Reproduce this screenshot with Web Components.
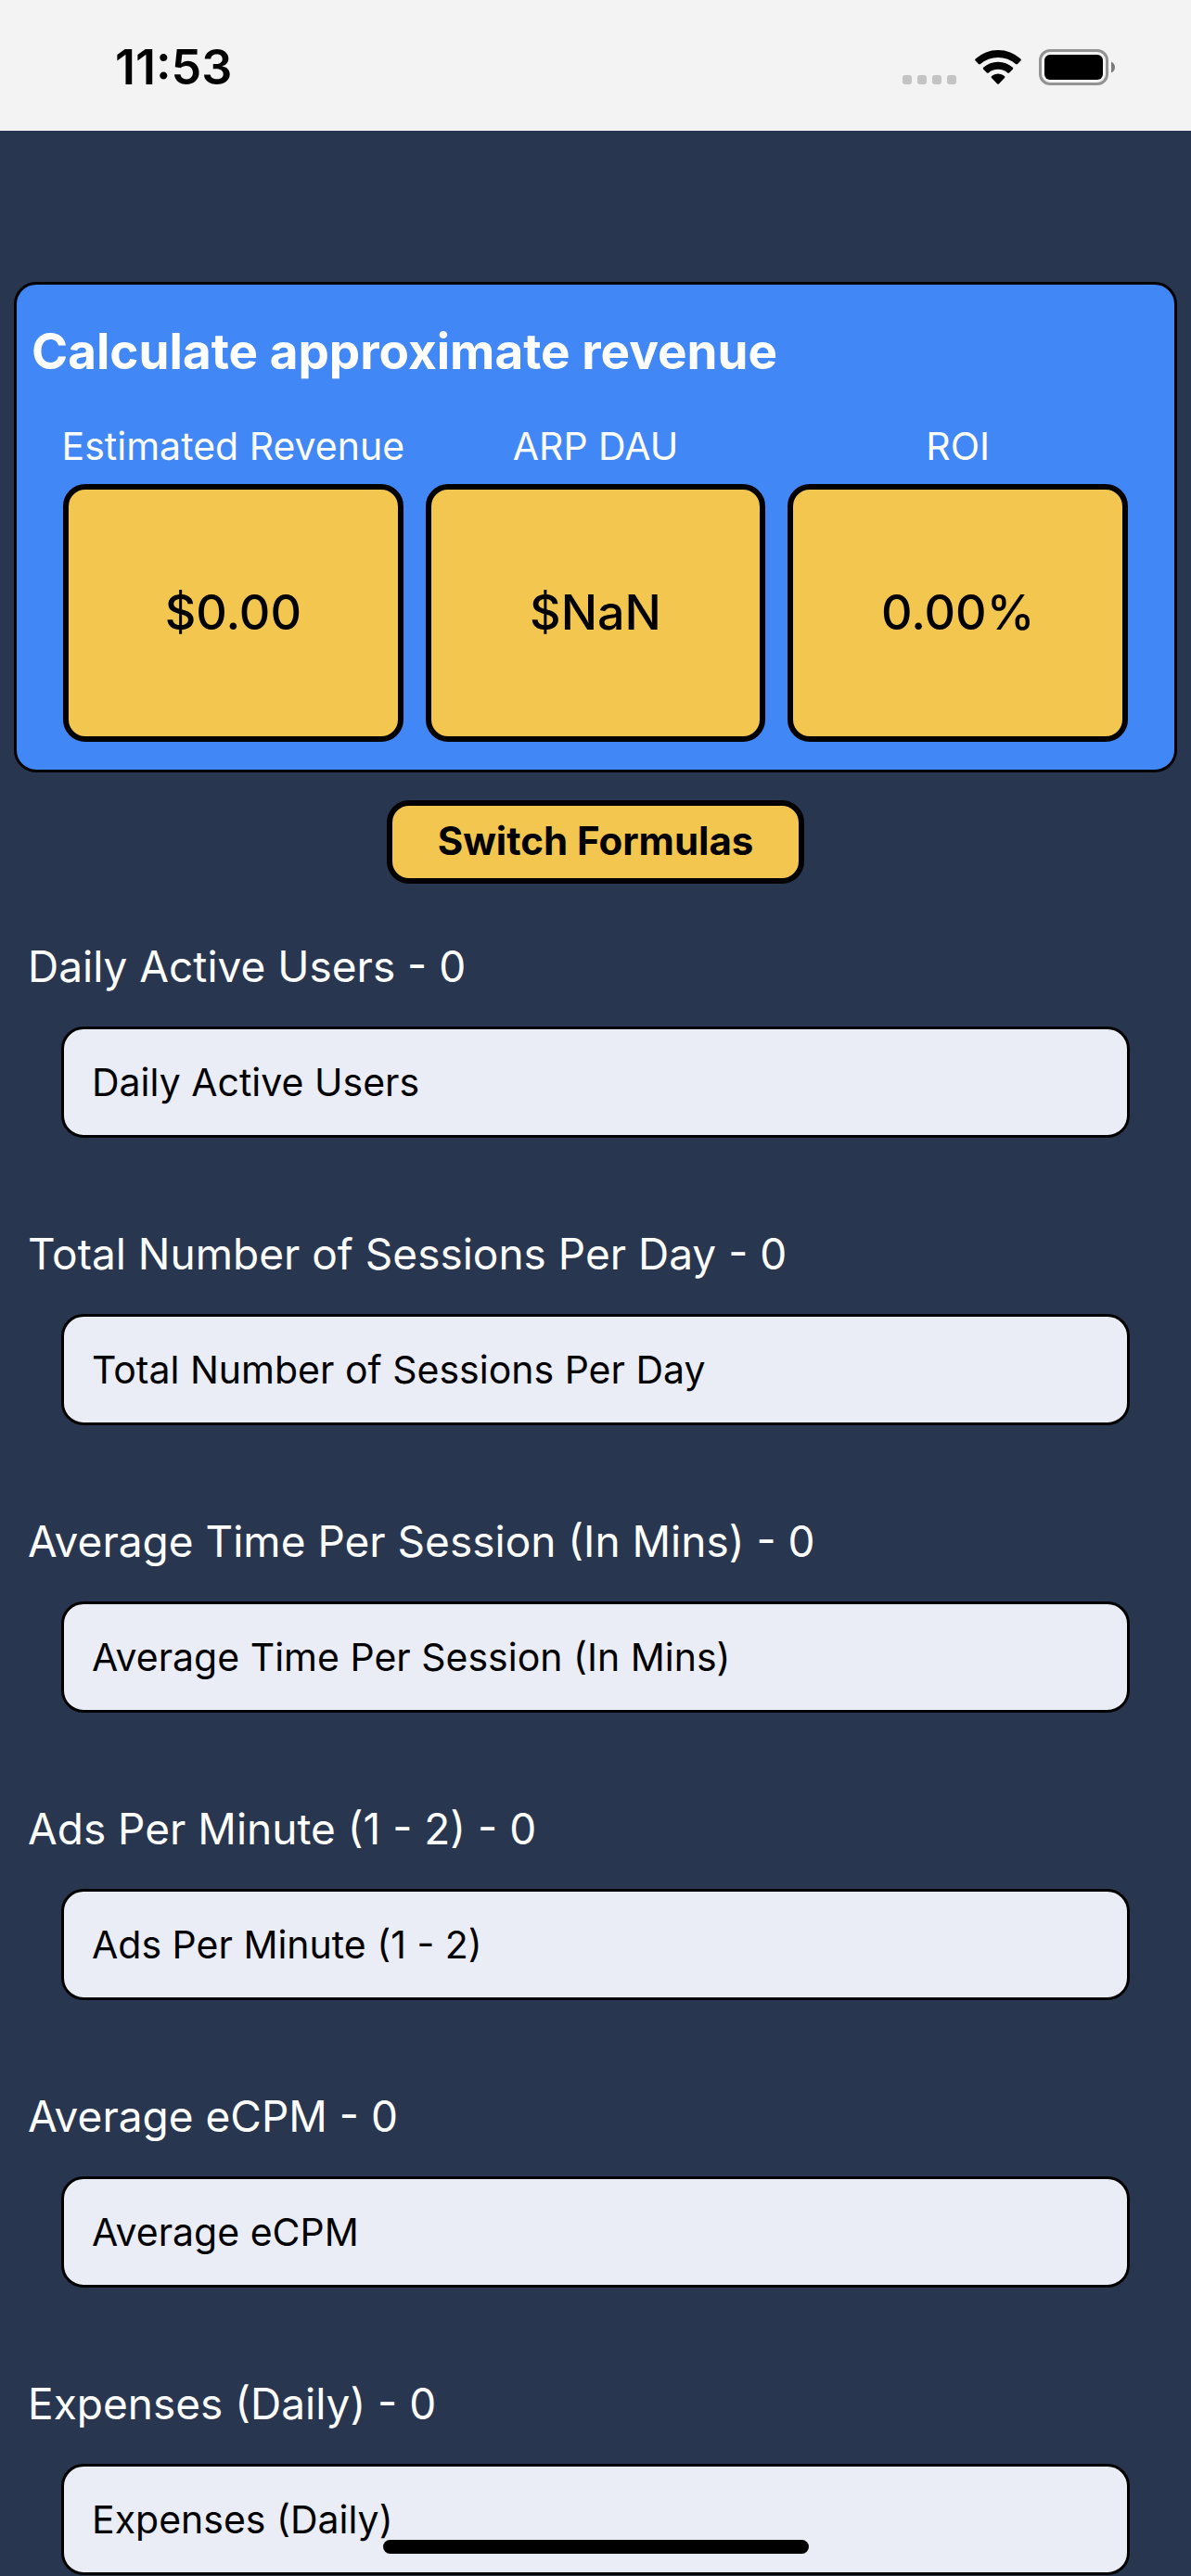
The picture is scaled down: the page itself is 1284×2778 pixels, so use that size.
<!DOCTYPE html>
<html lang="en">
<head>
<meta charset="utf-8">
<meta name="viewport" content="width=device-width, initial-scale=1">
<title>Revenue Calculator</title>
<style>
  body {
    margin: 0;
    background: #29364f;
    font-family: Inter, "Liberation Sans", sans-serif;
  }
</style>
</head>
<body>
<revenue-app></revenue-app>

<script>
class StatusBar extends HTMLElement {
  constructor() {
    super();
    this.attachShadow({ mode: 'open' });
  }

  connectedCallback() {
    this.shadowRoot.innerHTML = `
      <style>
        :host {
          display: flex;
          align-items: center;
          justify-content: space-between;
          box-sizing: border-box;
          height: 141px;
          padding: 5px 80px 0 124px;
          background: #f3f3f3;
          color: #000;
        }

        time {
          font-size: 52px;
          line-height: 60px;
          font-weight: 600;
        }

        .icons {
          display: flex;
          align-items: center;
          gap: 18px;
        }

        svg {
          display: block;
        }
      </style>

      <time><slot></slot></time>
      <div class="icons">
        <svg width="60" height="40" viewBox="0 0 60 40" fill="#c3c3c3" aria-hidden="true">
          <rect x="1" y="28" width="10" height="10" rx="3"/>
          <rect x="17" y="28" width="10" height="10" rx="3"/>
          <rect x="33" y="28" width="10" height="10" rx="3"/>
          <rect x="49" y="28" width="10" height="10" rx="3"/>
        </svg>
        <svg width="52" height="40" viewBox="0 0 52 40" aria-hidden="true">
          <path d="M1.6 10.6Q0.6 11.5 1.6 12.5L5 16Q6 16.9 7 16Q15 9 26 9T45 16Q46 16.9 47 16L50.4 12.5Q51.4 11.5 50.4 10.6Q40 1 26 1T1.6 10.6Z"/>
          <path d="M10.2 19.8Q9.2 20.8 10.2 21.7L13.9 25.4Q14.8 26.3 15.8 25.4Q20 21.7 26 21.7T36.2 25.4Q37.2 26.3 38.1 25.4L41.8 21.7Q42.8 20.8 41.8 19.8Q35 13.7 26 13.7T10.2 19.8Z"/>
          <path d="M19 29Q18 30 19 31L25.2 37.4Q26 38.2 26.8 37.4L33 31Q34 30 33 29Q30 26.5 26 26.5T19 29Z"/>
        </svg>
        <svg width="84" height="40" viewBox="0 0 84 40" aria-hidden="true">
          <rect x="1.5" y="1.5" width="72" height="36" rx="10.5" fill="none" stroke="#939393" stroke-width="3"/>
          <rect x="6" y="6" width="63" height="27" rx="6"/>
          <path d="M78 13.5Q82 15.500 82 19.5T78 25.5Z" fill="#7b7b7b"/>
        </svg>
      </div>
    `;
  }
}

class ResultTile extends HTMLElement {
  constructor() {
    super();
    this.attachShadow({ mode: 'open' });
  }

  connectedCallback() {
    this.shadowRoot.innerHTML = `
      <style>
        :host {
          display: flex;
          flex-direction: column;
          align-items: center;
          gap: 16px;
          flex: 1 1 0;
          min-width: 0;
        }

        .label {
          font-size: 41px;
          line-height: 50px;
          white-space: nowrap;
          color: #fff;
        }

        output {
          display: flex;
          align-items: center;
          justify-content: center;
          box-sizing: border-box;
          width: 100%;
          height: 278px;
          border: 6px solid #000;
          border-radius: 24px;
          background: #f2c64f;
          color: #000;
          font-size: 52px;
          line-height: 64px;
          font-weight: 500;
        }
      </style>

      <label class="label" for="value">${this.getAttribute('label')}</label>
      <output id="value"><slot></slot></output>
    `;
  }
}

class RevenueCard extends HTMLElement {
  constructor() {
    super();
    this.attachShadow({ mode: 'open' });
  }

  connectedCallback() {
    this.shadowRoot.innerHTML = `
      <style>
        :host {
          display: block;
          padding: 40px 16px 30px;
          border: 3px solid #000;
          border-radius: 24px;
          background: #4287f6;
        }

        h1 {
          margin: 0;
          font-size: 53px;
          line-height: 64px;
          font-weight: 700;
          color: #fff;
        }

        .tiles {
          display: flex;
          gap: 24px;
          margin: 45px 34px 0;
        }
      </style>

      <h1>${this.getAttribute('heading')}</h1>
      <div class="tiles"><slot></slot></div>
    `;
  }
}

class SwitchButton extends HTMLElement {
  constructor() {
    super();
    this.attachShadow({ mode: 'open' });
  }

  connectedCallback() {
    this.shadowRoot.innerHTML = `
      <style>
        :host {
          display: block;
        }

        button {
          display: block;
          margin: 0 auto;
          padding: 13px 49px 15px;
          border: 6px solid #000;
          border-radius: 24px;
          background: #f2c64f;
          color: #000;
          font-family: inherit;
          font-size: 42px;
          line-height: 50px;
          font-weight: 700;
          cursor: pointer;
        }
      </style>

      <button type="button"><slot></slot></button>
    `;
  }
}

class NumberField extends HTMLElement {
  constructor() {
    super();
    this.attachShadow({ mode: 'open' });
  }

  connectedCallback() {
    const name = this.getAttribute('name');
    this.shadowRoot.innerHTML = `
      <style>
        :host {
          display: block;
        }

        label {
          display: block;
          padding: 0 30px;
          font-size: 46px;
          line-height: 60px;
          color: #fff;
        }

        .box {
          margin: 35px 66px 0;
        }

        input {
          display: block;
          box-sizing: border-box;
          width: 100%;
          height: 120px;
          padding: 0 30px;
          border: 3px solid #000;
          border-radius: 24px;
          outline: none;
          background: #eaedf6;
          color: #000;
          font-family: inherit;
          font-size: 41px;
        }

        input::placeholder {
          color: #000;
          opacity: 1;
        }
      </style>

      <label for="field">${name} - <span class="value">0</span></label>
      <div class="box">
        <input id="field" type="text" inputmode="decimal" placeholder="${name}">
      </div>
    `;

    const input = this.shadowRoot.querySelector('input');
    const value = this.shadowRoot.querySelector('.value');
    input.addEventListener('input', () => {
      value.textContent = input.value || '0';
    });
  }
}

class HomeIndicator extends HTMLElement {
  constructor() {
    super();
    this.attachShadow({ mode: 'open' });
  }

  connectedCallback() {
    this.shadowRoot.innerHTML = `
      <style>
        :host {
          display: flex;
          justify-content: center;
          position: fixed;
          left: 0;
          right: 0;
          bottom: 24px;
          pointer-events: none;
        }

        .bar {
          width: 459px;
          height: 15px;
          border-radius: 8px;
          background: #000;
        }
      </style>

      <div class="bar"></div>
    `;
  }
}

class RevenueApp extends HTMLElement {
  constructor() {
    super();
    this.attachShadow({ mode: 'open' });
  }

  connectedCallback() {
    this.shadowRoot.innerHTML = `
      <style>
        :host {
          display: block;
        }

        main {
          display: flex;
          flex-direction: column;
          gap: 30px;
          padding-top: 163px;
        }

        revenue-card {
          margin: 0 15px;
        }

        .fields {
          display: flex;
          flex-direction: column;
          gap: 95px;
          margin-top: 29px;
        }
      </style>

      <status-bar>11:53</status-bar>
      <main>
        <revenue-card heading="Calculate approximate revenue">
          <result-tile label="Estimated Revenue">$0.00</result-tile>
          <result-tile label="ARP DAU">$NaN</result-tile>
          <result-tile label="ROI">0.00%</result-tile>
        </revenue-card>
        <switch-button>Switch Formulas</switch-button>
        <div class="fields">
          <number-field name="Daily Active Users"></number-field>
          <number-field name="Total Number of Sessions Per Day"></number-field>
          <number-field name="Average Time Per Session (In Mins)"></number-field>
          <number-field name="Ads Per Minute (1 - 2)"></number-field>
          <number-field name="Average eCPM"></number-field>
          <number-field name="Expenses (Daily)"></number-field>
        </div>
      </main>
      <home-indicator></home-indicator>
    `;
  }
}

customElements.define('status-bar', StatusBar);
customElements.define('result-tile', ResultTile);
customElements.define('revenue-card', RevenueCard);
customElements.define('switch-button', SwitchButton);
customElements.define('number-field', NumberField);
customElements.define('home-indicator', HomeIndicator);
customElements.define('revenue-app', RevenueApp);
</script>
</body>
</html>
